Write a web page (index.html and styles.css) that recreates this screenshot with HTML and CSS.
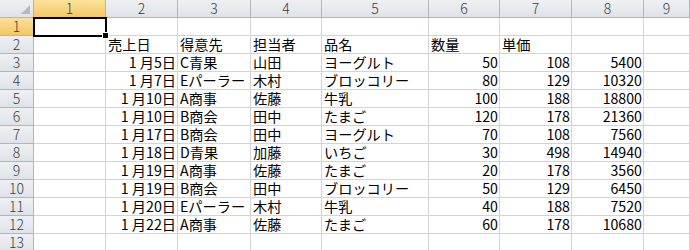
FILE: index.html
```html
<!DOCTYPE html>
<html lang="ja">
<head>
    <meta charset="UTF-8">
    <meta name="viewport" content="width=device-width, initial-scale=1.0">
    <link rel="stylesheet" href="styles.css">
</head>
<body>
    <div class="sheet">
        <div class="row head">
            <div class="cell corner"><span class="tri"></span></div>
            <div class="cell sel">1</div>
            <div class="cell">2</div>
            <div class="cell">3</div>
            <div class="cell">4</div>
            <div class="cell">5</div>
            <div class="cell">6</div>
            <div class="cell">7</div>
            <div class="cell">8</div>
            <div class="cell">9</div>
        </div>
        <div class="row">
            <div class="cell rh sel">1</div>
            <div class="cell active"><span class="handle"></span></div>
            <div class="cell"></div><div class="cell"></div><div class="cell"></div><div class="cell"></div>
            <div class="cell"></div><div class="cell"></div><div class="cell"></div><div class="cell"></div>
        </div>
        <div class="row">
            <div class="cell rh">2</div>
            <div class="cell"></div>
            <div class="cell">売上日</div>
            <div class="cell">得意先</div>
            <div class="cell">担当者</div>
            <div class="cell">品名</div>
            <div class="cell">数量</div>
            <div class="cell">単価</div>
            <div class="cell"></div><div class="cell"></div>
        </div>
        <div class="row">
            <div class="cell rh">3</div>
            <div class="cell"></div>
            <div class="cell num">1 月5日</div>
            <div class="cell">C青果</div>
            <div class="cell">山田</div>
            <div class="cell">ヨーグルト</div>
            <div class="cell num">50</div>
            <div class="cell num">108</div>
            <div class="cell num">5400</div>
            <div class="cell"></div>
        </div>
        <div class="row">
            <div class="cell rh">4</div>
            <div class="cell"></div>
            <div class="cell num">1 月7日</div>
            <div class="cell">Eパーラー</div>
            <div class="cell">木村</div>
            <div class="cell">ブロッコリー</div>
            <div class="cell num">80</div>
            <div class="cell num">129</div>
            <div class="cell num">10320</div>
            <div class="cell"></div>
        </div>
        <div class="row">
            <div class="cell rh">5</div>
            <div class="cell"></div>
            <div class="cell num">1 月10日</div>
            <div class="cell">A商事</div>
            <div class="cell">佐藤</div>
            <div class="cell">牛乳</div>
            <div class="cell num">100</div>
            <div class="cell num">188</div>
            <div class="cell num">18800</div>
            <div class="cell"></div>
        </div>
        <div class="row">
            <div class="cell rh">6</div>
            <div class="cell"></div>
            <div class="cell num">1 月10日</div>
            <div class="cell">B商会</div>
            <div class="cell">田中</div>
            <div class="cell">たまご</div>
            <div class="cell num">120</div>
            <div class="cell num">178</div>
            <div class="cell num">21360</div>
            <div class="cell"></div>
        </div>
        <div class="row">
            <div class="cell rh">7</div>
            <div class="cell"></div>
            <div class="cell num">1 月17日</div>
            <div class="cell">B商会</div>
            <div class="cell">田中</div>
            <div class="cell">ヨーグルト</div>
            <div class="cell num">70</div>
            <div class="cell num">108</div>
            <div class="cell num">7560</div>
            <div class="cell"></div>
        </div>
        <div class="row">
            <div class="cell rh">8</div>
            <div class="cell"></div>
            <div class="cell num">1 月18日</div>
            <div class="cell">D青果</div>
            <div class="cell">加藤</div>
            <div class="cell">いちご</div>
            <div class="cell num">30</div>
            <div class="cell num">498</div>
            <div class="cell num">14940</div>
            <div class="cell"></div>
        </div>
        <div class="row">
            <div class="cell rh">9</div>
            <div class="cell"></div>
            <div class="cell num">1 月19日</div>
            <div class="cell">A商事</div>
            <div class="cell">佐藤</div>
            <div class="cell">たまご</div>
            <div class="cell num">20</div>
            <div class="cell num">178</div>
            <div class="cell num">3560</div>
            <div class="cell"></div>
        </div>
        <div class="row">
            <div class="cell rh">10</div>
            <div class="cell"></div>
            <div class="cell num">1 月19日</div>
            <div class="cell">B商会</div>
            <div class="cell">田中</div>
            <div class="cell">ブロッコリー</div>
            <div class="cell num">50</div>
            <div class="cell num">129</div>
            <div class="cell num">6450</div>
            <div class="cell"></div>
        </div>
        <div class="row">
            <div class="cell rh">11</div>
            <div class="cell"></div>
            <div class="cell num">1 月20日</div>
            <div class="cell">Eパーラー</div>
            <div class="cell">木村</div>
            <div class="cell">牛乳</div>
            <div class="cell num">40</div>
            <div class="cell num">188</div>
            <div class="cell num">7520</div>
            <div class="cell"></div>
        </div>
        <div class="row">
            <div class="cell rh">12</div>
            <div class="cell"></div>
            <div class="cell num">1 月22日</div>
            <div class="cell">A商事</div>
            <div class="cell">佐藤</div>
            <div class="cell">たまご</div>
            <div class="cell num">60</div>
            <div class="cell num">178</div>
            <div class="cell num">10680</div>
            <div class="cell"></div>
        </div>
        <div class="row">
            <div class="cell rh">13</div>
            <div class="cell"></div><div class="cell"></div><div class="cell"></div><div class="cell"></div>
            <div class="cell"></div><div class="cell"></div><div class="cell"></div><div class="cell"></div>
            <div class="cell"></div>
        </div>
    </div>
</body>
</html>
```

FILE: styles.css
```css
body {
    margin: 0;
    background: #ffffff;
    font-family: "Noto Sans CJK JP", "Noto Sans", sans-serif;
    font-size: 14.2px;
    color: #000000;
    overflow: hidden;
}
.sheet {
    width: 690px;
}
.row {
    display: grid;
    grid-template-columns: 34px 72px 72px 73px 71px 107px 71px 72px 72px 1fr;
    height: 18px;
}
.cell {
    box-sizing: border-box;
    border-right: 1px solid #d4d4d4;
    border-bottom: 1px solid #d4d4d4;
    padding: 0 2px;
    line-height: 17px;
    white-space: pre;
    font-variant-numeric: tabular-nums;
    position: relative;
}
.num {
    text-align: right;
    padding-right: 1px;
}
.head .cell, .rh {
    background: linear-gradient(#eef0f3, #dfe3e8);
    border-right: 1px solid #b1b6bd;
    border-bottom: 1px solid #b1b6bd;
    color: #3c3c3c;
    text-align: center;
    font-size: 14px;
    font-weight: 300;
    padding: 0;
}
.head .cell.sel {
    background: linear-gradient(#fbe39c, #f3c865);
    border-bottom: 1px solid #f1a03c;
}
.rh.sel {
    background: linear-gradient(#fbe09a, #f2c767);
    border-right: 1px solid #f1a03c;
}
.tri {
    position: absolute;
    right: 3px;
    bottom: 3px;
    width: 0;
    height: 0;
    border-left: 9px solid transparent;
    border-bottom: 9px solid #b5b9bf;
}
.active {
    outline: 2px solid #000000;
    outline-offset: -1px;
    z-index: 1;
}
.handle {
    position: absolute;
    right: -4px;
    bottom: -4px;
    width: 5px;
    height: 5px;
    background: #000000;
    border: 1px solid #ffffff;
}
```
